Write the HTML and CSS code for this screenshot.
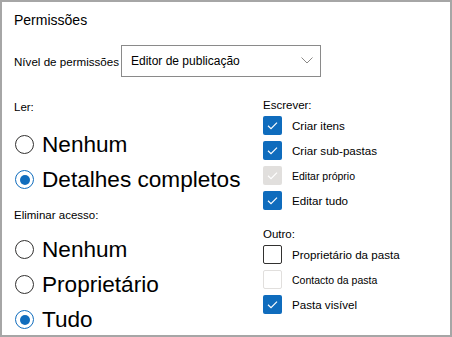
FILE: index.html
```html
<!DOCTYPE html>
<html lang="pt">
<head>
<meta charset="utf-8">
<link rel="stylesheet" href="styles.css">
</head>
<body>
<div class="panel">
  <div class="title">Permissões</div>
  <div class="level">
    <span class="level-label">Nível de permissões</span>
    <div class="select">
      <span class="select-text">Editor de publicação</span>
      <svg class="chev" width="12" height="7" viewBox="0 0 12 7"><polyline points="0.5,0.5 6,6 11.5,0.5" fill="none" stroke="#8a8886" stroke-width="1"/></svg>
    </div>
  </div>
  <div class="cols">
    <div class="col-left">
      <div class="label read">Ler:</div>
      <div class="radios">
        <div class="radio-row"><span class="radio"></span><span class="rtext">Nenhum</span></div>
        <div class="radio-row"><span class="radio on"></span><span class="rtext">Detalhes completos</span></div>
      </div>
      <div class="label del">Eliminar acesso:</div>
      <div class="radios">
        <div class="radio-row"><span class="radio"></span><span class="rtext">Nenhum</span></div>
        <div class="radio-row"><span class="radio"></span><span class="rtext">Proprietário</span></div>
        <div class="radio-row"><span class="radio on"></span><span class="rtext">Tudo</span></div>
      </div>
    </div>
    <div class="col-right">
      <div class="label write">Escrever:</div>
      <div class="checks">
        <div class="check-row"><span class="box on"><svg width="19" height="19" viewBox="0 0 19 19"><polyline points="5,9.8 8,12.6 14,6.6" fill="none" stroke="#fff" stroke-width="1.2"/></svg></span><span class="ctext">Criar itens</span></div>
        <div class="check-row"><span class="box on"><svg width="19" height="19" viewBox="0 0 19 19"><polyline points="5,9.8 8,12.6 14,6.6" fill="none" stroke="#fff" stroke-width="1.2"/></svg></span><span class="ctext">Criar sub-pastas</span></div>
        <div class="check-row"><span class="box dis-on"><svg width="19" height="19" viewBox="0 0 19 19"><polyline points="5,9.8 8,12.6 14,6.6" fill="none" stroke="#fff" stroke-width="1.2"/></svg></span><span class="ctext small">Editar próprio</span></div>
        <div class="check-row"><span class="box on"><svg width="19" height="19" viewBox="0 0 19 19"><polyline points="5,9.8 8,12.6 14,6.6" fill="none" stroke="#fff" stroke-width="1.2"/></svg></span><span class="ctext">Editar tudo</span></div>
      </div>
      <div class="label other">Outro:</div>
      <div class="checks">
        <div class="check-row"><span class="box off"></span><span class="ctext">Proprietário da pasta</span></div>
        <div class="check-row"><span class="box dis-off"></span><span class="ctext small">Contacto da pasta</span></div>
        <div class="check-row"><span class="box on"><svg width="19" height="19" viewBox="0 0 19 19"><polyline points="5,9.8 8,12.6 14,6.6" fill="none" stroke="#fff" stroke-width="1.2"/></svg></span><span class="ctext">Pasta visível</span></div>
      </div>
    </div>
  </div>
</div>
</body>
</html>
```
FILE: styles.css
```css
html, body {
  margin: 0;
  padding: 0;
  background: #fff;
}
body {
  font-family: "Liberation Sans", Arial, sans-serif;
  color: #000;
}
.panel {
  width: 452px;
  height: 337px;
  box-sizing: border-box;
  border: 2px solid #a6a6a6;
  padding: 8px 0 0 12px;
  overflow: hidden;
}
.title {
  font-size: 14px;
  line-height: 20px;
  height: 20px;
}
.level {
  margin-top: 15px;
  display: flex;
  align-items: center;
  height: 32px;
}
.level-label {
  font-size: 11.6px;
  width: 107px;
  white-space: nowrap;
}
.select {
  width: 200px;
  height: 32px;
  box-sizing: border-box;
  border: 1px solid #8a8a8a;
  display: flex;
  align-items: center;
  justify-content: space-between;
  padding: 0 7px 0 9px;
}
.select-text {
  font-size: 12px;
}
.chev {
  display: block;
  margin-top: -2px;
}
.cols {
  display: flex;
}
.col-left {
  width: 249px;
  display: flex;
  flex-direction: column;
}
.col-right {
  display: flex;
  flex-direction: column;
}
.label {
  font-size: 11.5px;
  line-height: 16px;
  height: 16px;
  white-space: nowrap;
}
.read { margin-top: 22px; margin-bottom: 12px; }
.del { margin-top: 10px; margin-bottom: 9px; }
.write { margin-top: 20px; }
.other { margin-top: 13px; }
.radio-row {
  height: 35px;
  display: flex;
  align-items: center;
}
.radio {
  width: 19px;
  height: 19px;
  box-sizing: border-box;
  border: 1px solid #323130;
  border-radius: 50%;
  margin-left: 1px;
  margin-right: 8px;
  flex: none;
  position: relative;
}
.radio.on {
  border-color: #0f6cbd;
}
.radio.on::after {
  content: "";
  position: absolute;
  left: 3.5px;
  top: 3.5px;
  width: 10px;
  height: 10px;
  border-radius: 50%;
  background: #0f6cbd;
}
.rtext {
  font-size: 22.6px;
  white-space: nowrap;
}
.check-row {
  height: 25px;
  display: flex;
  align-items: center;
}
.box {
  width: 19px;
  height: 19px;
  box-sizing: border-box;
  border-radius: 2px;
  margin-right: 10px;
  flex: none;
  position: relative;
}
.box svg {
  position: absolute;
  left: 0;
  top: 0;
}
.box.on {
  background: #0f6cbd;
}
.box.dis-on {
  background: #e1dfdd;
}
.box.off {
  border: 1px solid #323130;
  background: #fff;
}
.box.dis-off {
  border: 1px solid #e1dfdd;
  background: #fff;
}
.ctext {
  font-size: 11.6px;
  white-space: nowrap;
}
.ctext.small {
  font-size: 10.5px;
}
```
